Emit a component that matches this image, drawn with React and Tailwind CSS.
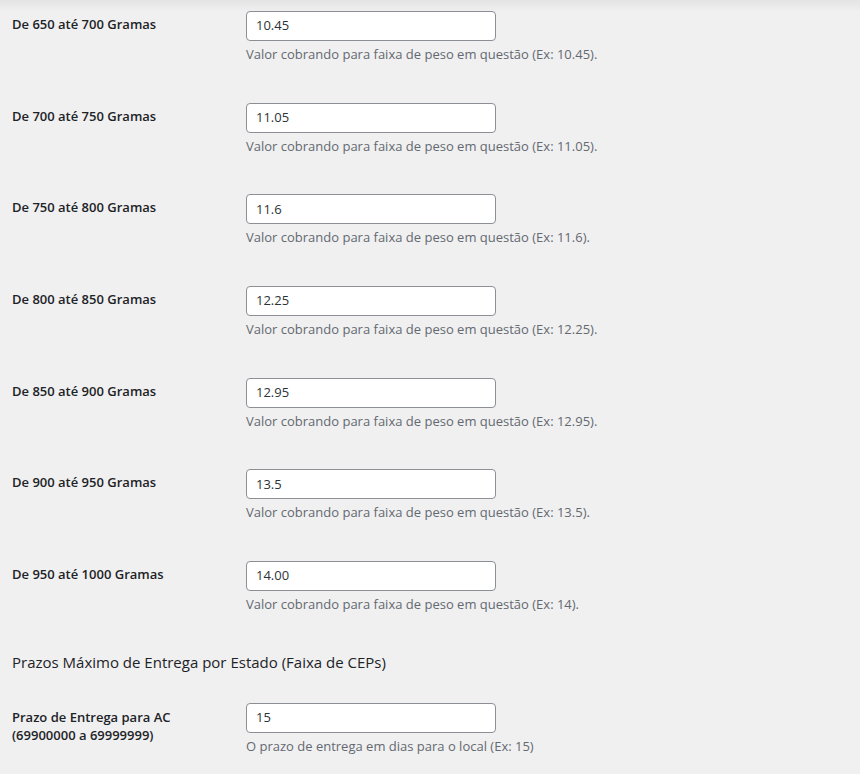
import React from "react";

const rows = [
  ["De 650 até 700 Gramas", "10.45", "10.45"],
  ["De 700 até 750 Gramas", "11.05", "11.05"],
  ["De 750 até 800 Gramas", "11.6", "11.6"],
  ["De 800 até 850 Gramas", "12.25", "12.25"],
  ["De 850 até 900 Gramas", "12.95", "12.95"],
  ["De 900 até 950 Gramas", "13.5", "13.5"],
  ["De 950 até 1000 Gramas", "14.00", "14"],
];

function Field({ value, desc }) {
  return (
    <div className="flex flex-col">
      <div className="w-[250px] h-[30px] bg-white border border-[#8c8f94] rounded-[4px] px-[9px] flex items-center text-[13px] text-[#2c3338]">
        {value}
      </div>
      <p className="mt-[4px] text-[13px] leading-[19.5px] text-[#646970]">{desc}</p>
    </div>
  );
}

export default function App() {
  return (
    <div
      className="relative min-h-screen bg-[#f0f0f1] pl-[12px] pt-[11px]"
      style={{ fontFamily: "'Open Sans', 'Noto Sans', sans-serif" }}
    >
      <div className="pointer-events-none absolute left-0 right-0 top-0 h-[12px] bg-gradient-to-b from-[#e4e4e5] to-[#f0f0f1]" />
      <div className="relative">
        {rows.map(([label, value, ex]) => (
          <div key={label} className="flex h-[91.67px]">
            <div className="w-[234px] pt-[5px] text-[13px] leading-[17px] font-semibold text-[#1d2327]">
              {label}
            </div>
            <Field value={value} desc={`Valor cobrando para faixa de peso em questão (Ex: ${ex}).`} />
          </div>
        ))}
        <h2 className="-mt-[1px] text-[15px] leading-[20px] font-medium text-[#1d2327]">
          Prazos Máximo de Entrega por Estado (Faixa de CEPs)
        </h2>
        <div className="mt-[31px] flex">
          <div className="w-[234px] pt-[5px] text-[13px] leading-[18px] font-semibold text-[#1d2327]">
            Prazo de Entrega para AC
            <br />
            (69900000 a 69999999)
          </div>
          <Field value="15" desc="O prazo de entrega em dias para o local (Ex: 15)" />
        </div>
      </div>
    </div>
  );
}
